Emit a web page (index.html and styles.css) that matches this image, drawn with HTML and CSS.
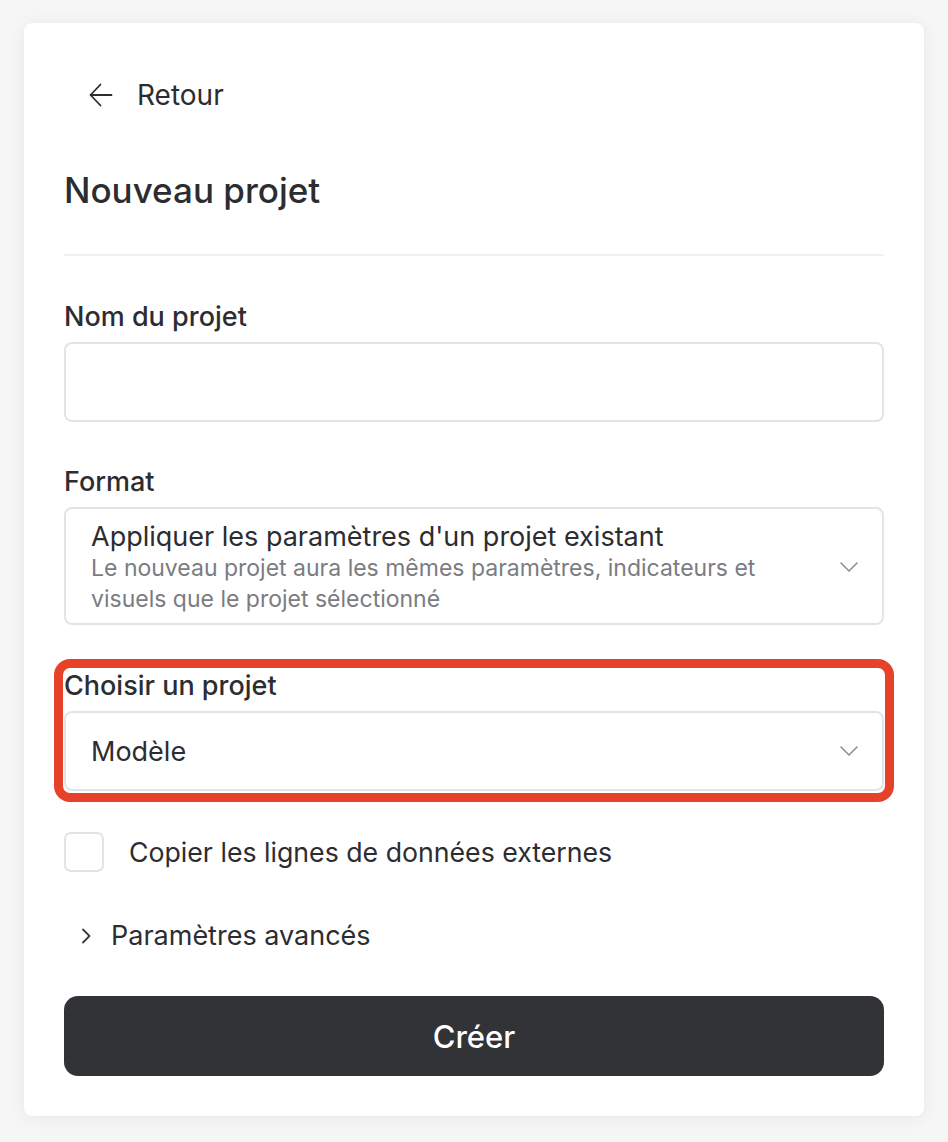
FILE: index.html
```html
<!DOCTYPE html>
<html lang="fr">
<head>
<meta charset="utf-8">
<title>Nouveau projet</title>
<link rel="stylesheet" href="styles.css">
</head>
<body>
<div class="card">
  <button class="back">
    <svg class="back-icon" width="24" height="24" viewBox="0 0 24 24" fill="none" stroke="currentColor" stroke-width="1.8" stroke-linecap="round" stroke-linejoin="round"><path d="M22.5 12H1.8"/><path d="M11.5 1.5L1.5 12L11.5 22.5"/></svg>
    <span>Retour</span>
  </button>
  <h1 class="title">Nouveau projet</h1>
  <hr class="divider">

  <div class="field">
    <label class="label">Nom du projet</label>
    <div class="input"></div>
  </div>

  <div class="field">
    <label class="label">Format</label>
    <div class="select select-tall">
      <div class="select-text">
        <div class="select-main">Appliquer les paramètres d'un projet existant</div>
        <div class="select-sub">Le nouveau projet aura les mêmes paramètres, indicateurs et visuels que le projet sélectionné</div>
      </div>
      <svg class="chev" width="18" height="10" viewBox="0 0 18 10" fill="none" stroke="currentColor" stroke-width="1.6" stroke-linecap="round" stroke-linejoin="round"><path d="M1 1L9 9L17 1"/></svg>
    </div>
  </div>

  <div class="field field-highlight">
    <label class="label">Choisir un projet</label>
    <div class="select">
      <div class="select-main">Modèle</div>
      <svg class="chev" width="18" height="10" viewBox="0 0 18 10" fill="none" stroke="currentColor" stroke-width="1.6" stroke-linecap="round" stroke-linejoin="round"><path d="M1 1L9 9L17 1"/></svg>
    </div>
    <div class="highlight"></div>
  </div>

  <div class="check-row">
    <span class="checkbox"></span>
    <span class="check-label">Copier les lignes de données externes</span>
  </div>

  <div class="advanced">
    <svg class="chev-right" width="12" height="18" viewBox="0 0 12 18" fill="none" stroke="currentColor" stroke-width="1.8" stroke-linecap="round" stroke-linejoin="round"><path d="M3 2.5L9.5 9L3 15.5"/></svg>
    <span>Paramètres avancés</span>
  </div>

  <button class="submit">Créer</button>
</div>
</body>
</html>
```

FILE: styles.css
```css
* { box-sizing: border-box; }

html, body {
  margin: 0;
  padding: 0;
  background: #f6f6f7;
}

body {
  font-family: Inter, "Noto Sans", "Liberation Sans", sans-serif;
  color: #2c2d31;
  padding: 23px 24px 26px;
}

.card {
  width: 900px;
  background: #ffffff;
  border-radius: 8px;
  box-shadow: 0 2px 18px rgba(0, 0, 0, 0.06), 0 0 2px rgba(0, 0, 0, 0.04);
  padding: 48px 40px 40px;
}

.back {
  display: flex;
  align-items: center;
  gap: 24px;
  height: 48px;
  padding: 0 0 0 25px;
  border: 0;
  background: none;
  font: inherit;
  font-size: 28px;
  color: #2c2d31;
  cursor: pointer;
}

.back-icon { flex: none; color: #2c2d31; }

.title {
  margin: 51px 0 0;
  font-size: 35px;
  line-height: 40px;
  font-weight: 500;
  color: #2c2d31;
}

.divider {
  margin: 44px 0 0;
  border: 0;
  height: 2px;
  background: #f0f0f2;
}

.field {
  display: flex;
  flex-direction: column;
  gap: 9px;
  margin-top: 44px;
}

.field:first-of-type { margin-top: 45px; }

.label {
  font-size: 27px;
  line-height: 32px;
  font-weight: 500;
  color: #2c2d31;
}

.input {
  height: 80px;
  border: 2px solid #e4e4e8;
  border-radius: 8px;
}

.select {
  display: flex;
  align-items: center;
  justify-content: space-between;
  height: 80px;
  padding: 0 24px 0 25px;
  border: 2px solid #e4e4e8;
  border-radius: 8px;
}

.select-tall {
  height: 118px;
  align-items: flex-start;
  padding-top: 11px;
}

.select-tall .chev { align-self: center; margin-top: -9px; }

.select-text {
  flex: 1;
  max-width: 700px;
}

.select-main {
  font-size: 27px;
  line-height: 33px;
  color: #2c2d31;
}

.select-sub {
  font-size: 23px;
  line-height: 31px;
  color: #7b7c81;
}

.chev { flex: none; color: #8d8e93; }

.field-highlight {
  position: relative;
  margin-top: 45px;
}

.highlight {
  position: absolute;
  top: -11px;
  left: -10px;
  right: -10px;
  bottom: -11px;
  border: 9px solid #e8412a;
  border-radius: 16px;
  pointer-events: none;
}

.check-row {
  display: flex;
  align-items: center;
  gap: 25px;
  margin-top: 41px;
}

.checkbox {
  width: 40px;
  height: 40px;
  border: 2px solid #e2e2e7;
  border-radius: 7px;
  flex: none;
}

.check-label {
  font-size: 26.7px;
  line-height: 32px;
  color: #2c2d31;
}

.advanced {
  display: flex;
  align-items: center;
  gap: 19px;
  margin-top: 48px;
  padding-left: 16px;
  font-size: 27px;
  line-height: 32px;
  color: #2c2d31;
}

.chev-right { flex: none; color: #3a3b40; }

.submit {
  display: block;
  width: 100%;
  height: 80px;
  margin-top: 44px;
  border: 0;
  border-radius: 14px;
  background: #323337;
  color: #ffffff;
  font: inherit;
  font-size: 31px;
  font-weight: 500;
  cursor: pointer;
}
```
